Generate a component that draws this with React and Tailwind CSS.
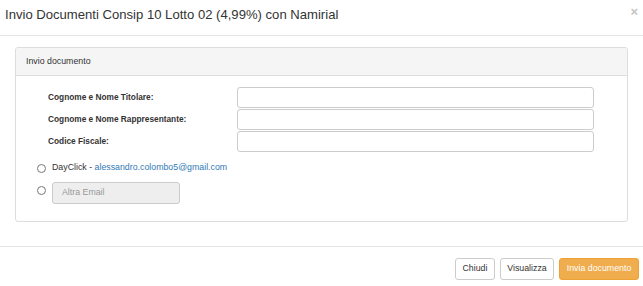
export default function App() {
  return (
    <div className="w-[643px] h-[286px] bg-white text-[#333] font-['Liberation_Sans',Arial,sans-serif] overflow-hidden">
      {/* Header */}
      <div className="h-[36px] border-b border-[#e5e5e5] flex justify-between pl-[5px] pr-[5px]">
        <h4 className="text-[13.1px] leading-[15px] pt-[7px]">
          Invio Documenti Consip 10 Lotto 02 (4,99%) con Namirial
        </h4>
        <button className="text-[13px] leading-[13px] font-bold text-[#c4c4c4] pt-[5px] h-fit">×</button>
      </div>

      {/* Body */}
      <div className="px-[15px] pt-[11px] pb-[24px]">
        <div className="border border-[#ddd] rounded-[3px]">
          <div className="h-[28px] bg-[#f5f5f5] border-b border-[#ddd] rounded-t-[3px] px-[10px] flex items-center text-[8.8px]">
            Invio documento
          </div>
          <div className="pt-[11px] pb-[17px]">
            <div className="flex flex-col gap-[1px] pl-[32px]">
              <FieldRow label="Cognome e Nome Titolare:" />
              <FieldRow label="Cognome e Nome Rappresentante:" />
              <FieldRow label="Codice Fiscale:" />
            </div>

            <div className="pl-[21px] mt-[10px] flex flex-col gap-[8px] text-[8.8px]">
              <label className="flex items-center gap-[6px] h-[12px]">
                <Radio />
                <span>
                  DayClick - <a className="text-[#337ab7]">alessandro.colombo5@gmail.com</a>
                </span>
              </label>
              <div className="flex items-start gap-[6px]">
                <span className="mt-[4px]"><Radio /></span>
                <div className="w-[128px] h-[22px] bg-[#eee] border border-[#ccc] rounded-[3px] flex items-center px-[9px] text-[#999]">
                  Altra Email
                </div>
              </div>
            </div>
          </div>
        </div>
      </div>

      {/* Footer */}
      <div className="border-t border-[#e5e5e5] flex justify-end gap-[5px] pt-[11px] pr-[4px] text-[8.8px]">
        <button className="h-[22px] w-[40px] border border-[#ccc] rounded-[3px] bg-white">Chiudi</button>
        <button className="h-[22px] w-[54px] border border-[#ccc] rounded-[3px] bg-white">Visualizza</button>
        <button className="h-[22px] w-[80px] border border-[#eea236] rounded-[3px] bg-[#f0ad4e] text-white">Invia documento</button>
      </div>
    </div>
  );
}

function FieldRow({ label }) {
  return (
    <div className="flex items-center h-[21px]">
      <div className="w-[189px] text-[8.3px] font-bold">{label}</div>
      <div className="w-[357px] h-[21px] border border-[#ccc] rounded-[3px] bg-white"></div>
    </div>
  );
}

function Radio() {
  return <span className="block w-[9px] h-[9px] rounded-full border border-[#777] bg-white"></span>;
}
